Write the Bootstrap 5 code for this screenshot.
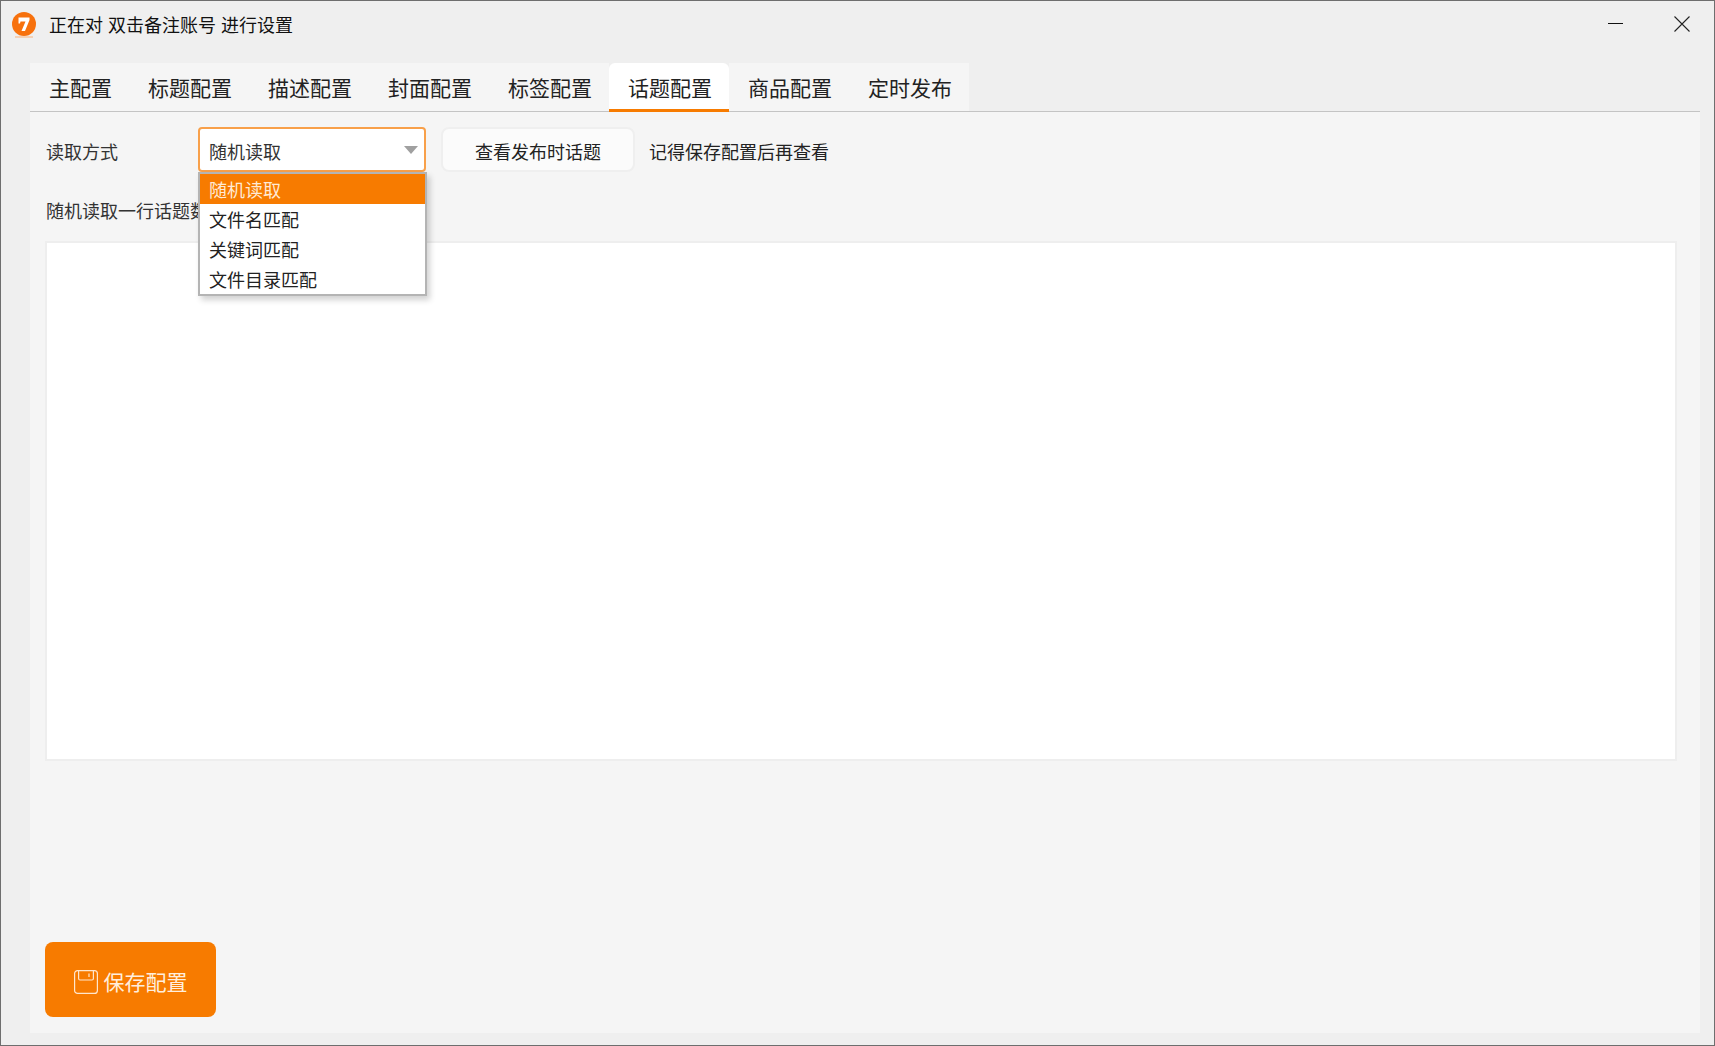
<!DOCTYPE html>
<html lang="zh-CN">
<head>
    <meta charset="UTF-8">
    <meta name="viewport" content="width=device-width, initial-scale=1.0">
    <title>话题配置</title>
    <link href="https://cdn.jsdelivr.net/npm/bootstrap@5.3.0/dist/css/bootstrap.min.css" rel="stylesheet">
    <style>
        html, body { height: 100%; }
        body {
            background: #efefef;
            color: #1f1f1f;
            font-family: "Noto Sans CJK SC", "Liberation Sans", sans-serif;
            font-size: 18px;
            overflow: hidden;
        }
        .app-window { height: 1046px; border: 1px solid #6e6e6e; }
        .title-bar { height: 62px; padding: 0 24px 16px 11px; }
        .app-logo { width: 25px; height: 26px; flex: none; margin: 1px 12px 0 0; }
        .title-text { font-size: 18px; line-height: 26px; color: #111; white-space: pre; word-spacing: 1px; }
        .win-btn { width: 16px; height: 16px; flex: none; display: block; }
        .win-gap { margin-left: 50px; }
        .main-panel { margin: 0 14px 12px 29px; min-height: 0; }
        .tab-strip { height: 49px; border-bottom: 1px solid #c4c4c4; }
        .tab-item {
            padding: 0 17px 0 19px; height: 48px; line-height: 48px;
            font-size: 21px; color: #222; background: #f5f5f5;
            white-space: nowrap;
        }
        .tab-item.is-current {
            background: #fff; border-radius: 6px 6px 0 0; height: 49px;
            border-bottom: 3px solid #f77b00;
        }
        .panel-body { background: #f5f5f5; padding: 15px 22px 16px 16px; min-height: 0; }
        .field-row { height: 45px; }
        .field-label { width: 152px; flex: none; color: #333; padding-top: 3px; }
        .combo-wrap { width: 228px; flex: none; }
        .combo-box {
            height: 45px; background: #fff; border: 2px solid #f8a04a; border-radius: 4px;
            padding: 3px 6px 0 9px; color: #333;
        }
        .combo-arrow {
            width: 0; height: 0; border-left: 7px solid transparent; border-right: 7px solid transparent;
            border-top: 8px solid #a0a0a0; margin-top: -3px;
        }
        .combo-list {
            position: absolute; left: 0; top: 45px; width: 229px; z-index: 5;
            background: #fff; border: 2px solid #b4b4b4;
            box-shadow: 3px 4px 6px rgba(0, 0, 0, .18);
            height: 124px; padding: 0; overflow: hidden;
        }
        .combo-option {
            height: 30px; line-height: 31px; padding: 0 9px; color: #222; font-size: 18px;
        }
        .combo-option.is-picked { background: #f77b00; color: #ffe9d4; }
        .plain-btn {
            width: 194px; height: 45px; margin-left: 15px; padding: 3px 0 0;
            background: #fbfbfb; border: 2px solid #efefef; border-radius: 8px;
            font-size: 18px; color: #222;
        }
        .hint-text { margin-left: 14px; color: #222; padding-top: 3px; }
        .sub-label { height: 27px; line-height: 27px; margin-top: 25px; color: #333; }
        .topic-area {
            display: block; width: 1632px; height: 520px; margin: 17px 0 0 -1px;
            background: #fff; border: 2px solid #eeeeee; border-radius: 0; resize: none;
        }
        .save-btn {
            width: 171px; height: 75px; margin: auto 0 0 -1px; padding: 4px 0 0;
            background: #f77b00; border: 0; border-radius: 8px;
            color: #ffeedd; font-size: 21px; gap: 6px;
        }
        .save-btn:hover { background: #f77b00; color: #ffeedd; }
        .save-icon { width: 24px; height: 24px; flex: none; margin-top: 1px; }
    </style>
</head>

<body>
    <div class="app-window d-flex flex-column">
        <div class="title-bar d-flex align-items-center">
            <svg class="app-logo" viewBox="0 0 25 26">
                <circle cx="12" cy="12" r="12" fill="#f7710d"/>
                <path d="M6.500 5.500H17.500V8L13 19H9.500L13.500 9.500H8.500L8 11.500H6.500Z" fill="#fff"/>
                <rect x="3" y="24.500" width="18" height="1" fill="#f9b27a"/>
            </svg>
            <span class="title-text">正在对 双击备注账号 进行设置</span>
            <svg class="win-btn ms-auto" viewBox="0 0 16 16"><path d="M0 7.500H15" stroke="#111" stroke-width="1"/></svg>
            <svg class="win-btn win-gap" viewBox="0 0 16 16"><path d="M.5.500L15.500 15.500M15.500.500L.5 15.500" stroke="#222" stroke-width="1.100" fill="none"/></svg>
        </div>

        <div class="main-panel flex-grow-1 d-flex flex-column">
            <div class="tab-strip d-flex">
                <div class="tab-item">主配置</div>
                <div class="tab-item">标题配置</div>
                <div class="tab-item">描述配置</div>
                <div class="tab-item">封面配置</div>
                <div class="tab-item">标签配置</div>
                <div class="tab-item is-current">话题配置</div>
                <div class="tab-item">商品配置</div>
                <div class="tab-item">定时发布</div>
            </div>

            <div class="panel-body flex-grow-1 d-flex flex-column">
                <div class="field-row d-flex align-items-center">
                    <div class="field-label">读取方式</div>
                    <div class="combo-wrap position-relative">
                        <div class="combo-box d-flex align-items-center justify-content-between">
                            <span>随机读取</span>
                            <span class="combo-arrow"></span>
                        </div>
                        <div class="combo-list">
                            <div class="combo-option is-picked">随机读取</div>
                            <div class="combo-option">文件名匹配</div>
                            <div class="combo-option">关键词匹配</div>
                            <div class="combo-option">文件目录匹配</div>
                        </div>
                    </div>
                    <button type="button" class="btn plain-btn">查看发布时话题</button>
                    <span class="hint-text">记得保存配置后再查看</span>
                </div>

                <div class="sub-label">随机读取一行话题数</div>
                <textarea class="topic-area"></textarea>

                <button type="button" class="btn save-btn d-flex align-items-center justify-content-center">
                    <svg class="save-icon" viewBox="0 0 24 24" fill="none" stroke="#ffe6cc" stroke-width="1.200">
                        <rect x=".6" y=".6" width="22.800" height="22.800" rx="3"/>
                        <path d="M4.600 .6V8.500Q4.600 10 6 10H18Q19.400 10 19.400 8.500V.6M15 3.500V7"/>
                    </svg>
                    <span>保存配置</span>
                </button>
            </div>
        </div>
    </div>

    <script src="https://cdn.jsdelivr.net/npm/bootstrap@5.3.0/dist/js/bootstrap.bundle.min.js"></script>
</body>
</html>
